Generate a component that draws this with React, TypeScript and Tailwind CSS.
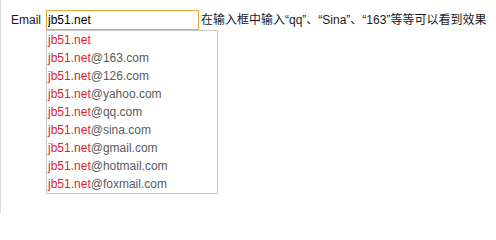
import React from "react";

const domains = ["", "@163.com", "@126.com", "@yahoo.com", "@qq.com", "@sina.com", "@gmail.com", "@hotmail.com", "@foxmail.com"];

export default function App() {
  return (
    <div
      className="min-h-[213px] border-l border-[#dcdcdc] bg-white pl-[10px] pt-[10px] text-[12px] text-[#1a1a1a]"
      style={{ fontFamily: '"Liberation Sans", Arial, "Noto Sans CJK SC", sans-serif' }}
    >
      <div className="flex items-center">
        <span className="leading-[20px]">Email</span>
        <div className="relative ml-[5px]">
          <input
            readOnly
            value="jb51.net"
            className="box-border block h-[20px] w-[153px] border border-[#e4a53a] bg-white px-[1px] text-[12px] leading-[18px] text-black outline-none"
            style={{ fontFamily: '"Liberation Sans", Arial, sans-serif' }}
          />
          <ul className="absolute left-0 top-[20px] box-border w-[172px] border border-[#c8c8c8] bg-white">
            {domains.map((d) => (
              <li key={d} className="h-[18px] pl-[1px] leading-[18px]">
                <span className="text-[#d8262c]">jb51.net</span>
                <span className="text-[#5a5a5a]">{d}</span>
              </li>
            ))}
          </ul>
        </div>
        <span className="ml-[2px] leading-[20px]">在输入框中输入“qq”、“Sina”、“163”等等可以看到效果</span>
      </div>
    </div>
  );
}
